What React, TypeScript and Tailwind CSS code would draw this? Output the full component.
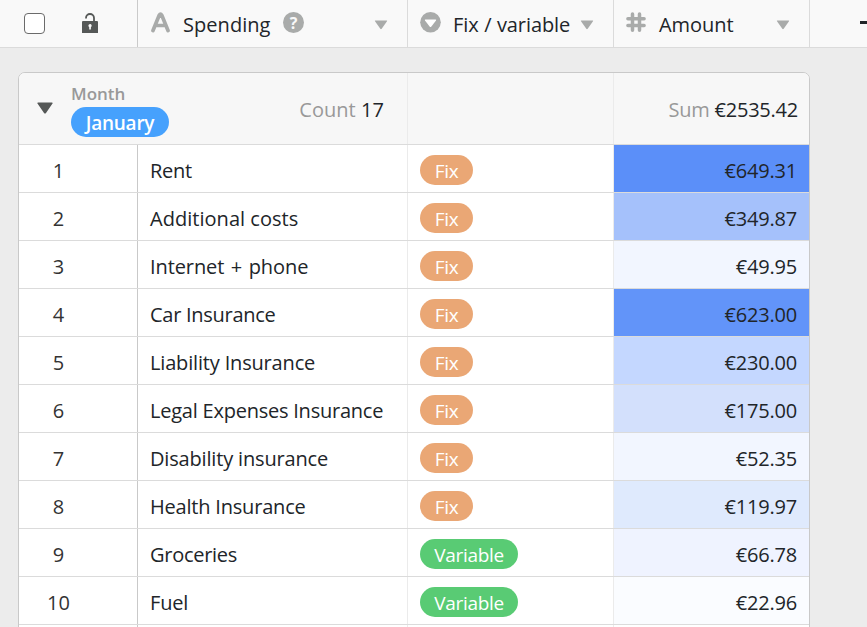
const rows = [
  { name: "Rent", amount: "€649.31", bg: "bg-[#5b8ff9]", tag: "Fix", ls: "tracking-[-0.25px]" },
  { name: "Additional costs", amount: "€349.87", bg: "bg-[#a5c1fb]", tag: "Fix", ls: "tracking-[0.03px]" },
  { name: "Internet + phone", amount: "€49.95", bg: "bg-[#f2f6ff]", tag: "Fix", ls: "tracking-[-0.1px] [word-spacing:1.5px]" },
  { name: "Car Insurance", amount: "€623.00", bg: "bg-[#6294f9]", tag: "Fix", ls: "tracking-[-0.28px]" },
  { name: "Liability Insurance", amount: "€230.00", bg: "bg-[#c4d7ff]", tag: "Fix", ls: "tracking-[-0.17px]" },
  { name: "Legal Expenses Insurance", amount: "€175.00", bg: "bg-[#d3e0fc]", tag: "Fix", ls: "tracking-[-0.23px]" },
  { name: "Disability insurance", amount: "€52.35", bg: "bg-[#f2f6ff]", tag: "Fix", ls: "tracking-[-0.17px]" },
  { name: "Health Insurance", amount: "€119.97", bg: "bg-[#dfeafd]", tag: "Fix", ls: "tracking-[-0.2px]" },
  { name: "Groceries", amount: "€66.78", bg: "bg-[#eff3ff]", tag: "Variable", ls: "tracking-[-0.28px]" },
  { name: "Fuel", amount: "€22.96", bg: "bg-[#fafcff]", tag: "Variable", ls: "tracking-[-0.15px]" },
];

function Caret({ className }: { className: string }) {
  return (
    <svg className={`h-[10px] w-[14px] shrink-0 ${className}`} viewBox="0 0 14 10">
      <path d="M1.3 .5h11.4q.8 0 .3.7L7.7 8.8q-.7.9-1.4 0L1 1.2Q.5.5 1.3.5z" fill="#a9abaa" />
    </svg>
  );
}

function Header() {
  return (
    <div className="flex h-12 border-b border-[#dbdbdb] bg-[#f9f9f9]">
      <div className="flex w-[138px] border-r border-[#cacaca]">
        <div className="mt-[13px] ml-6 h-[21px] w-[21px] rounded-[4px] border-[1.5px] border-[#6b6b6b] bg-white" />
        <svg className="mt-[13px] ml-[37px] h-[20px] w-[16px]" viewBox="0 0 16 20">
          <path d="M4 5.500V5a4 4 0 0 1 8 0v4" fill="none" stroke="#555857" strokeWidth="1.8" />
          <path d="M1 8h14q1 0 1 1v11H0V9q0-1 1-1z" fill="#555857" />
          <path d="M8 11a1.8 1.8 0 0 1 .9 3.3V16.500H7.200V14.300A1.8 1.8 0 0 1 8 11z" fill="#f9f9f9" />
        </svg>
      </div>
      <div className="flex w-[270px] border-r border-[#dbdbdb]">
        <svg className="mt-[12px] ml-[13px] h-[21px] w-[19px]" viewBox="0 0 19 21">
          <path d="M2 18.500 8.200 3.200Q9.500 1.200 10.800 3.200L17 18.500M5 13.500h9" fill="none" stroke="#a9abaa" strokeWidth="3.700" strokeLinecap="round" strokeLinejoin="round" />
        </svg>
        <span className="mt-[11px] ml-[13px] w-[88px] tracking-[0.05px]">Spending</span>
        <div className="mt-[12px] ml-[12px] flex h-[21px] w-[21px] items-center justify-center rounded-full bg-[#a9abaa] text-[16px] leading-5 font-bold text-[#f9f9f9]">?</div>
        <Caret className="mt-[20px] ml-[70px]" />
      </div>
      <div className="flex w-[206px] border-r border-[#dbdbdb]">
        <svg className="mt-[12px] ml-3 h-[21px] w-[21px]" viewBox="0 0 21 21">
          <circle cx="10.500" cy="10.300" r="10.300" fill="#a9abaa" />
          <path d="M5.500 7.500h10q1.200 0 .5 1l-4.600 6q-.9 1-1.800 0L5 8.500q-.7-1 .5-1z" fill="#fff" />
        </svg>
        <span className="mt-[11px] ml-3 w-[117px] tracking-[-0.1px] [word-spacing:0.5px]">Fix / variable</span>
        <Caret className="mt-[20px] ml-[10px]" />
      </div>
      <div className="flex w-[196px] border-r border-[#dbdbdb]">
        <svg className="mt-[12px] ml-3 h-[21px] w-5" viewBox="0 0 20 21">
          <path d="M6.500 1.900v16.400M13.500 1.900v16.400M1.900 6.800h16.200M1.900 13.500h16.200" fill="none" stroke="#a9abaa" strokeWidth="3.500" strokeLinecap="round" />
        </svg>
        <span className="mt-[11px] ml-[13px] w-[76px] tracking-[-0.05px]">Amount</span>
        <Caret className="mt-[20px] ml-[41px]" />
      </div>
      <div className="mt-[21px] ml-[50px] h-[3px] w-[7px] bg-[#212529]" />
    </div>
  );
}

export default function App() {
  return (
    <div className="h-[627px] w-[867px] overflow-hidden bg-[#ececec] font-['Open_Sans','Noto_Sans',sans-serif] text-[20px] leading-[28px] whitespace-nowrap text-[#212529]">
      <Header />
      <div className="mt-6 ml-[18px] h-[600px] w-[792px] overflow-hidden rounded-t-[7px] border border-[#c9c9c9] bg-white">
        <div className="flex h-[72px] shrink-0 border-b border-[#dbdbdb] bg-[#f7f7f7]">
          <div className="flex w-[389px] border-r border-[#ebebeb]">
            <svg className="mt-[29px] ml-[18px] h-3 w-4" viewBox="0 0 16 12">
              <path d="M1 .5h14q1.200 0 .5 1L9 11q-1 1.200-2 0L.5 1.500Q-.2.5 1 .5z" fill="#555857" />
            </svg>
            <div className="ml-[18px] flex flex-col items-start">
              <span className="mt-[9px] h-[25px] text-[17px] leading-6 font-semibold text-[#999]">Month</span>
              <span className="flex h-[30px] w-[98px] justify-center rounded-full bg-[#46a1fd] text-[19px] leading-[33px] font-semibold tracking-[-0.25px] text-white">January</span>
            </div>
            <div className="mt-[23px] mr-[23px] ml-auto tracking-[0.05px]">
              <span className="text-[#999]">Count</span> 17
            </div>
          </div>
          <div className="w-[206px] border-r border-[#ebebeb]" />
          <div className="mt-[23px] mr-[11px] ml-auto tracking-[-0.23px]">
            <span className="text-[#999]">Sum</span> €2535.42
          </div>
        </div>
        {rows.map((r, i) => (
          <div key={r.name} className="flex h-12 border-b border-[#dbdbdb] leading-[52px]">
            <div className="w-[119px] border-r border-[#c9c9c9] pr-[39px] text-center text-[#333]">{i + 1}</div>
            <div className={`w-[270px] border-r border-[#ebebeb] pl-3 ${r.ls}`}>{r.name}</div>
            <div className="w-[206px] border-r border-[#ebebeb] pt-[10px] pl-3">
              <div
                className={`flex h-[30px] justify-center rounded-full text-[19px] leading-[32px] tracking-[-0.3px] text-white ${
                  r.tag === "Fix" ? "w-[53px] bg-[#eaa775]" : "w-[98px] bg-[#59cb74]"
                }`}
              >
                {r.tag}
              </div>
            </div>
            <div className={`w-[195px] pr-3 text-right tracking-[-0.2px] ${r.bg}`}>{r.amount}</div>
          </div>
        ))}
        <div className="flex h-12">
          <div className="w-[119px] border-r border-[#c9c9c9]" />
          <div className="w-[270px] border-r border-[#ebebeb]" />
          <div className="w-[206px] border-r border-[#ebebeb]" />
        </div>
      </div>
    </div>
  );
}
